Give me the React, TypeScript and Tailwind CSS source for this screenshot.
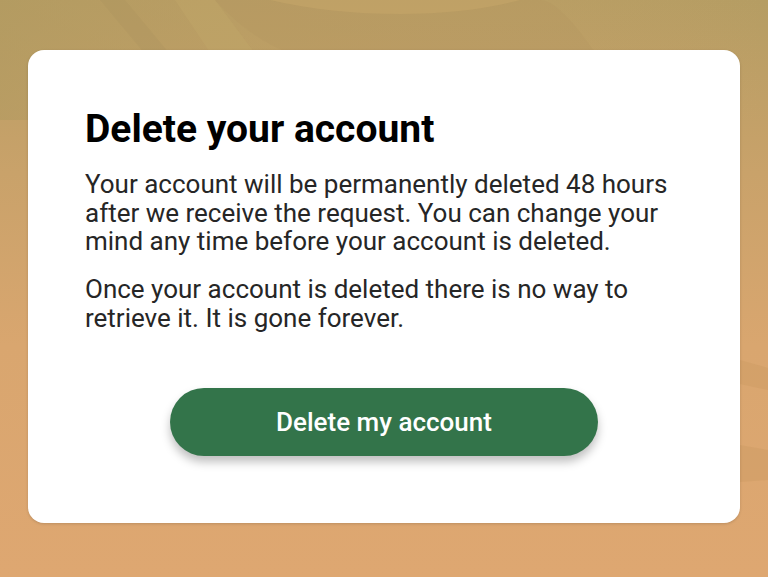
import React from "react";

export default function App() {
  return (
    <div
      className="relative h-[577px] w-[768px] overflow-hidden bg-[linear-gradient(180deg,#b59d63_0%,#c9a26a_30%,#d9a66f_60%,#dea771_100%)]"
      style={{ fontFamily: "Roboto, 'Liberation Sans', sans-serif" }}
    >
      <svg className="absolute inset-0" width="768" height="577" viewBox="0 0 768 577">
        <defs>
          <linearGradient id="lr" x1="0" x2="1" y1="0" y2="0">
            <stop offset="0" stopColor="#b29a60" stopOpacity="0.6" />
            <stop offset="1" stopColor="#d6a56c" stopOpacity="0" />
          </linearGradient>
        </defs>
        <rect x="0" y="0" width="768" height="120" fill="url(#lr)" />
        <path d="M100 0 L150 60 L175 60 L125 0 Z" fill="#a8905a" opacity="0.25" />
        <path d="M175 0 L215 60 L260 60 L215 0 Z" fill="#c4a869" opacity="0.35" />
        <path d="M215 0 Q270 60 330 60 L600 60 Q560 0 540 0 Z" fill="#b3955f" opacity="0.3" />
        <path d="M270 0 Q330 14 400 14 Q470 14 520 0 Z" fill="#c8a86a" opacity="0.5" />
        <path d="M740 360 L768 368 L768 390 L740 384 Z" fill="#c9985f" opacity="0.35" />
        <path d="M740 445 L768 450 L768 480 L740 482 Z" fill="#c9985f" opacity="0.35" />
      </svg>
      <div className="relative px-[28px] pt-[50px]">
        <div className="flex h-[473px] w-[712px] flex-col rounded-[16px] bg-white px-[57px] pt-[56px] shadow-[0_1px_3px_rgba(0,0,0,0.15)]">
          <h1 className="text-[39px] font-bold leading-[46px] text-black">Delete your account</h1>
          <p className="mt-[18px] text-[26px] leading-[28.5px] text-[#262626]">
            Your account will be permanently deleted 48 hours after we receive the request. You can change your mind any time before your account is deleted.
          </p>
          <p className="mt-[19.5px] text-[26px] leading-[28.5px] text-[#262626]">
            Once your account is deleted there is no way to retrieve it. It is gone forever.
          </p>
          <div className="mt-[56px] flex justify-center">
            <button className="h-[68px] w-[428px] rounded-full bg-[#33744a] text-[26px] font-medium text-white shadow-[0_6px_10px_rgba(0,0,0,0.25)]">
              Delete my account
            </button>
          </div>
        </div>
      </div>
    </div>
  );
}
